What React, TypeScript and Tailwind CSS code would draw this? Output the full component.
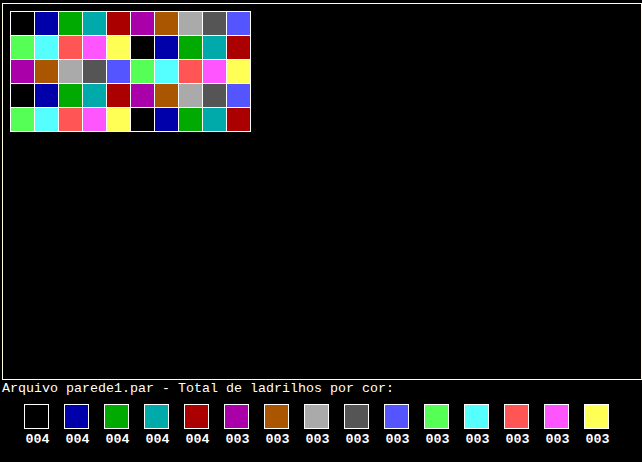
const palette = [
  "#000000",
  "#0000aa",
  "#00aa00",
  "#00aaaa",
  "#aa0000",
  "#aa00aa",
  "#aa5500",
  "#aaaaaa",
  "#555555",
  "#5555ff",
  "#55ff55",
  "#55ffff",
  "#ff5555",
  "#ff55ff",
  "#ffff55",
];

// 5 x 10 wall, colors cycle through the palette
const tiles = Array.from({ length: 50 }, (_, i) => i % 15);

const counts = palette.map((_, c) => tiles.filter((t) => t === c).length);

export default function App() {
  return (
    <div
      className="w-[642px] h-[462px] bg-black overflow-hidden pt-[3px] pl-[2px] text-white"
      style={{ fontFamily: '"Liberation Mono", "DejaVu Sans Mono", monospace' }}
    >
      <div className="w-[640px] h-[377px] border border-[#ffffe0] pt-[7px] pl-[7px]">
        <div className="grid grid-cols-[repeat(10,23px)] gap-px p-px bg-white w-[241px]">
          {tiles.map((t, i) => (
            <div key={i} className="h-[23px]" style={{ background: palette[t] }} />
          ))}
        </div>
      </div>

      <p className="text-[13.33px] leading-[16px] mt-[1px] whitespace-pre">
        Arquivo parede1.par - Total de ladrilhos por cor:
      </p>

      <div className="flex gap-[15px] pl-[22px] pt-[7px]">
        {palette.map((c, i) => (
          <div key={i} className="flex flex-col items-center w-[25px]">
            <div className="w-[25px] h-[25px] border border-white" style={{ background: c }} />
            <span className="text-[13.33px] leading-[16px] font-bold mt-[3px] ml-[2px]">
              {String(counts[i]).padStart(3, "0")}
            </span>
          </div>
        ))}
      </div>
    </div>
  );
}
